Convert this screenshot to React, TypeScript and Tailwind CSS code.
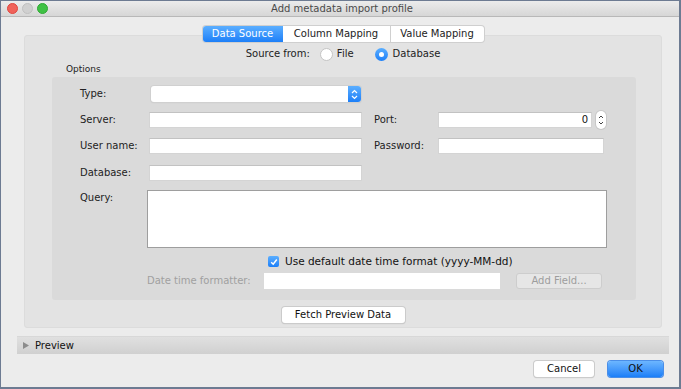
import React from "react";

function Field({ w, className = "" }: { w: string; className?: string }) {
  return <div className={`${w} h-[16px] bg-white border border-[#d4d4d4] border-t-[#c2c2c2] ${className}`} />;
}

function Label({ w, children }: { w: string; children: React.ReactNode }) {
  return <div className={`${w} shrink-0 text-[#222]`}>{children}</div>;
}

export default function App() {
  return (
    <div className="w-[681px] h-[389px] flex flex-col bg-[#ececec] border-l border-t border-r-2 border-b-2 border-[#6d7b92] font-['DejaVu_Sans',sans-serif] text-[10px] leading-none text-[#222] overflow-hidden">
      {/* title bar */}
      <div className="h-[16px] shrink-0 grid grid-cols-[1fr_auto_1fr] items-center bg-gradient-to-b from-[#ececec] to-[#d6d6d6] border-b border-[#b8b8b8]">
        <div className="flex items-center gap-[4px] pl-[6px]">
          <span className="w-[11px] h-[11px] rounded-full bg-[#f0625a] border border-[#e0463e]" />
          <span className="w-[11px] h-[11px] rounded-full bg-[#d0d0d0] border border-[#c0c0c0]" />
          <span className="w-[11px] h-[11px] rounded-full bg-[#3fc144] border border-[#2fa934]" />
        </div>
        <div className="text-[#4a4a4a] pl-[4px]">Add metadata import profile</div>
        <div />
      </div>

      {/* tabbed pane */}
      <div className="mx-[23px] w-[638px] mt-[9px] flex flex-col">
        <div className="self-center relative z-10 -mb-[7px] h-[16px] flex rounded-[3px] shadow-[0_0_0_1px_#cfcfcf] bg-white overflow-hidden">
          <div className="w-[80px] flex items-center justify-center text-white bg-gradient-to-b from-[#5aaeff] to-[#1b7ff8]">Data Source</div>
          <div className="w-[108px] flex items-center justify-center border-r border-[#d0d0d0]">Column Mapping</div>
          <div className="w-[93px] flex items-center justify-center">Value Mapping</div>
        </div>
        <div className="h-[293px] bg-[#e3e3e3] rounded-[3px] border border-[#dcdcdc] flex flex-col pt-[12px]">
          <div className="h-[12px] flex items-center justify-center">
            <span>Source from:</span>
            <span className="ml-[10px] w-[13px] h-[13px] rounded-full bg-white border border-[#c4c4c4]" />
            <span className="ml-[4px]">File</span>
            <span className="ml-[21px] w-[13px] h-[13px] rounded-full bg-gradient-to-b from-[#5aaeff] to-[#1b7ff8] flex items-center justify-center">
              <span className="w-[5px] h-[5px] rounded-full bg-white" />
            </span>
            <span className="ml-[5px]">Database</span>
          </div>
          <div className="h-[12px] mt-[3px] ml-[41px] text-[9px] flex items-center">Options</div>

          {/* options group */}
          <div className="mt-[2px] ml-[27px] w-[584px] h-[223px] bg-[#dadada] rounded-[3px] pt-[9px] pl-[28px] flex flex-col">
            <div className="h-[16px] flex items-center">
              <Label w="w-[71px]">Type:</Label>
              <div className="w-[210px] h-[16px] flex bg-white rounded-[3px] shadow-[0_0_0_1px_#d0d0d0,0_1px_1px_#bdbdbd]">
                <div className="flex-1" />
                <div className="w-[13px] h-[16px] rounded-r-[3px] bg-gradient-to-b from-[#5aaeff] to-[#1b7ff8] flex items-center justify-center">
                  <svg width="7" height="11" viewBox="0 0 7 11" fill="none" stroke="white" strokeWidth="1.2">
                    <path d="M1 4 L3.5 1.5 L6 4" />
                    <path d="M1 7 L3.5 9.5 L6 7" />
                  </svg>
                </div>
              </div>
            </div>

            <div className="h-[16px] mt-[10px] flex items-center">
              <Label w="w-[69px]">Server:</Label>
              <Field w="w-[213px]" />
              <div className="ml-[12px]"><Label w="w-[64px]">Port:</Label></div>
              <div className="w-[154px] h-[16px] bg-white border border-[#d4d4d4] border-t-[#c2c2c2] flex items-center justify-end pr-[3px] text-[#111]">0</div>
              <div className="ml-[4px] w-[10px] h-[18px] rounded-full bg-white shadow-[0_0_0_1px_#c8c8c8] flex items-center justify-center">
                <svg width="6" height="12" viewBox="0 0 6 12" fill="none" stroke="#444" strokeWidth="1">
                  <path d="M1 4 L3 2 L5 4" />
                  <path d="M1 8 L3 10 L5 8" />
                </svg>
              </div>
            </div>

            <div className="h-[16px] mt-[10px] flex items-center">
              <Label w="w-[69px]">User name:</Label>
              <Field w="w-[213px]" />
              <div className="ml-[12px]"><Label w="w-[64px]">Password:</Label></div>
              <Field w="w-[166px]" />
            </div>

            <div className="h-[16px] mt-[11px] flex items-center">
              <Label w="w-[69px]">Database:</Label>
              <Field w="w-[213px]" />
            </div>

            <div className="h-[58px] mt-[9px] flex items-start">
              <div className="pt-[3px]"><Label w="w-[67px]">Query:</Label></div>
              <div className="w-[460px] h-[58px] bg-white border border-[#9e9e9e]" />
            </div>

            <div className="h-[13px] mt-[7px] flex items-center pl-[188px]">
              <span className="w-[11px] h-[11px] rounded-[2px] bg-gradient-to-b from-[#5aaeff] to-[#1b7ff8] flex items-center justify-center">
                <svg width="8" height="8" viewBox="0 0 8 8" fill="none" stroke="white" strokeWidth="1.5">
                  <path d="M1.2 4.2 L3.2 6.2 L6.8 1.5" />
                </svg>
              </span>
              <span className="ml-[6px] text-[10.5px] text-[#111]">Use default date time format (yyyy-MM-dd)</span>
            </div>

            <div className="h-[16px] mt-[5px] flex items-center pl-[67px]">
              <div className="w-[117px] shrink-0 text-[#a0a0a0]">Date time formatter:</div>
              <div className="w-[236px] h-[16px] bg-white" />
              <div className="ml-[16px] w-[86px] h-[16px] rounded-[3px] bg-[#e6e6e6] border border-[#cdcdcd] flex items-center justify-center text-[#9d9d9d]">Add Field...</div>
            </div>
          </div>

          <div className="mt-[7px] self-center w-[123px] h-[16px] rounded-[3px] bg-white shadow-[0_0_0_1px_#cbcbcb,0_1px_1px_#b5b5b5] flex items-center justify-center text-[#111]">Fetch Preview Data</div>
        </div>
      </div>

      {/* preview */}
      <div className="mt-[8px] ml-[16px] w-[652px] h-[18px] bg-gradient-to-b from-[#e0e0e0] to-[#d0d0d0] border-t border-[#d8d8d8] flex items-center pl-[6px]">
        <svg width="6" height="7" viewBox="0 0 6 7">
          <path d="M0 0 L6 3.5 L0 7 Z" fill="#8c8c8c" />
        </svg>
        <span className="ml-[6px] text-[#111]">Preview</span>
      </div>

      {/* buttons */}
      <div className="mt-[7px] h-[16px] flex justify-end pr-[16px] gap-[14px]">
        <div className="w-[60px] h-[16px] rounded-[3px] bg-white shadow-[0_0_0_1px_#cbcbcb,0_1px_1px_#b5b5b5] flex items-center justify-center text-[#111]">Cancel</div>
        <div className="w-[55px] h-[16px] rounded-[3px] bg-gradient-to-b from-[#6cb6ff] to-[#1a7ef7] shadow-[0_0_0_1px_#4a8ee8] flex items-center justify-center text-[#111]">OK</div>
      </div>
    </div>
  );
}
